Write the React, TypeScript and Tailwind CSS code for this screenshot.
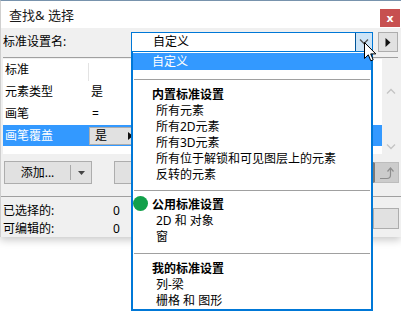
import React from "react";

const FONT = { fontFamily: '"Noto Sans", "Noto Sans CJK SC", sans-serif' };

function Chevron({ up, color }: { up?: boolean; color: string }) {
  return (
    <svg width="10" height="6" viewBox="0 0 10 6">
      <path d={up ? "M1 5.5 L5 1.5 L9 5.5" : "M1 0.5 L5 4.5 L9 0.5"} fill="none" stroke={color} strokeWidth="1.3" />
    </svg>
  );
}

function Item({ text, bold }: { text: string; bold?: boolean }) {
  return (
    <div className={`h-4 flex items-center leading-4 whitespace-nowrap ${bold ? "pl-[19px] font-bold" : "pl-[23px]"}`}>
      {text}
    </div>
  );
}

function Sep({ h, top }: { h: string; top: string }) {
  return (
    <div className={h}>
      <div className={`${top} mx-px h-px bg-[#a0a0a0]`} />
    </div>
  );
}

export default function App() {
  return (
    <div className="relative w-[401px] h-[311px] bg-white overflow-hidden text-[12px] text-black" style={FONT}>
      {/* dialog */}
      <div className="w-[401px] h-[237px] bg-[#f0f0f0] border-t border-t-[#7893ad] border-l border-l-[#cfcfcf] shadow-[0_3px_8px_rgba(0,0,0,0.22)] flex flex-col overflow-hidden">
        {/* title bar */}
        <div className="h-[27px] bg-white flex items-start justify-between shrink-0">
          <span className="mt-[5px] ml-[8px] text-[13px] leading-[18px] text-[#1a1a1a]">查找&amp; 选择</span>
          <div className="mt-[8px] mr-px w-[20px] h-[18px] bg-[#c75050] flex items-center justify-center">
            <span className="text-white text-[11px] font-bold leading-none" style={{ fontFamily: '"DejaVu Sans", sans-serif' }}>x</span>
          </div>
        </div>

        {/* name row */}
        <div className="mt-[4px] h-[20px] flex items-center shrink-0">
          <div className="w-[130px] pl-[2px] leading-[20px]">标准设置名:</div>
          <div className="w-[242px] h-[20px] bg-white border border-[#0078d7] flex items-center">
            <span className="flex-1 pl-[21px] leading-[18px]">自定义</span>
            <div className="w-[17px] h-full bg-[#cce4f7] border-l border-[#005499] flex items-center justify-center">
              <Chevron color="#555" />
            </div>
          </div>
          <div className="ml-[5px] w-[20px] h-[20px] bg-[#e1e1e1] border border-[#adadad] flex items-center justify-center">
            <svg width="6" height="9" viewBox="0 0 6 9"><path d="M0.5 0 L5.5 4.5 L0.5 9 Z" fill="#111" /></svg>
          </div>
        </div>

        <div className="mt-[5px] ml-[2px] mr-[3px] h-px bg-[#a0a0a0] shrink-0" />

        {/* table */}
        <div className="mt-[1px] flex shrink-0">
          <div className="ml-[2px] w-[379px] h-[95px] bg-white flex flex-col">
            <div className="h-[22px] flex">
              <div className="w-[85px] pl-[2px] leading-[22px]">标准</div>
              <div className="w-px h-[18px] mt-[4px] bg-[#e3e3e3]" />
            </div>
            <div className="h-[22px] flex items-center">
              <div className="w-[85px] pl-[2px]">元素类型</div>
              <div className="pl-[3px]">是</div>
            </div>
            <div className="h-[22px] flex items-center">
              <div className="w-[85px] pl-[2px]">画笔</div>
              <div className="pl-[4px]">=</div>
            </div>
            <div className="h-[21px] bg-[#3399ff] flex">
              <div className="w-[86px] pl-[2px] leading-[21px] text-white">画笔覆盖</div>
              <div className="mt-[2px] h-[18px] w-[120px] bg-[#e1e1e1] border border-[#adadad] flex items-center">
                <span className="pl-[5px] w-[38px]">是</span>
                <svg width="5" height="8" viewBox="0 0 5 8"><path d="M0 0 L5 4 L0 8 Z" fill="#111" /></svg>
              </div>
            </div>
          </div>
          <div className="w-[18px] h-[95px] flex flex-col items-center">
            <div className="mt-[29px]"><Chevron up color="#c4c4c4" /></div>
            <div className="mt-[50px]"><Chevron color="#c4c4c4" /></div>
          </div>
        </div>

        {/* buttons */}
        <div className="mt-[7px] h-[23px] flex shrink-0">
          <div className="ml-[3px] w-[88px] h-[23px] bg-[#e1e1e1] border border-[#adadad] flex items-center">
            <span className="w-[65px] text-center leading-[21px]">添加...</span>
            <div className="w-px h-[15px] bg-[#a8a8a8]" />
            <div className="flex-1 flex justify-center">
              <svg width="7" height="4" viewBox="0 0 7 4"><path d="M0 0 L7 0 L3.5 4 Z" fill="#444" /></svg>
            </div>
          </div>
          <div className="ml-[22px] w-[60px] h-[23px] bg-[#e1e1e1] border border-[#adadad]" />
          <div className="ml-auto mr-[2px] mt-px w-[26px] h-[21px] bg-[#cccccc] border border-[#bdbdbd] border-l-[#7a7a7a] border-l-2 flex items-center justify-center">
            <svg width="16" height="14" viewBox="0 0 16 14">
              <path d="M1 12.5 H8 Q11.5 12.5 11.5 9 V3" fill="none" stroke="#8e8e8e" strokeWidth="1.2" />
              <path d="M8.5 5.5 L11.5 2 L14.5 5.5" fill="none" stroke="#8e8e8e" strokeWidth="1.2" />
            </svg>
          </div>
        </div>

        <div className="mt-[12px] h-px bg-[#a0a0a0] shrink-0" />

        {/* counters */}
        <div className="flex shrink-0">
          <div className="flex flex-col pt-[5px]">
            <div className="h-[18px] flex items-center">
              <span className="w-[112px] pl-[2px]">已选择的:</span>
              <span>0</span>
            </div>
            <div className="h-[18px] flex items-center">
              <span className="w-[112px] pl-[2px]">可编辑的:</span>
              <span>0</span>
            </div>
          </div>
          <div className="ml-auto mr-[2px] mt-[11px] w-[26px] h-[21px] bg-[#e1e1e1] border border-[#adadad]" />
        </div>
      </div>

      {/* dropdown list */}
      <div className="absolute left-[131px] top-[52px] w-[242px] h-[259px] bg-white border-x-2 border-b-2 border-[#0078d7] flex flex-col">
        <div className="mt-px h-[17px] bg-[#3399ff] text-white pl-[19px] leading-[17px]">自定义</div>
        <Sep h="h-[17px]" top="mt-[9px]" />
        <Item text="内置标准设置" bold />
        <Item text="所有元素" />
        <Item text="所有2D元素" />
        <Item text="所有3D元素" />
        <Item text="所有位于解锁和可见图层上的元素" />
        <Item text="反转的元素" />
        <Sep h="h-[15px]" top="mt-[7px]" />
        <div className="relative">
          <div className="absolute left-0 top-[-1px] w-[15px] h-[15px] rounded-full bg-[#12a04a]" />
          <Item text="公用标准设置" bold />
        </div>
        <Item text="2D 和 对象" />
        <Item text="窗" />
        <Sep h="h-4" top="mt-[8px]" />
        <Item text="我的标准设置" bold />
        <Item text="列-梁" />
        <Item text="栅格 和 图形" />
      </div>

      {/* mouse cursor */}
      <svg className="absolute left-[364px] top-[42px]" width="13" height="21" viewBox="0 0 13 21">
        <path d="M0.5 0.5 L0.5 16.5 L4.3 12.8 L6.8 18.8 L9.2 17.8 L6.7 11.9 L11.8 11.9 Z" fill="#fff" stroke="#000" strokeWidth="1" strokeLinejoin="miter" />
      </svg>
    </div>
  );
}
